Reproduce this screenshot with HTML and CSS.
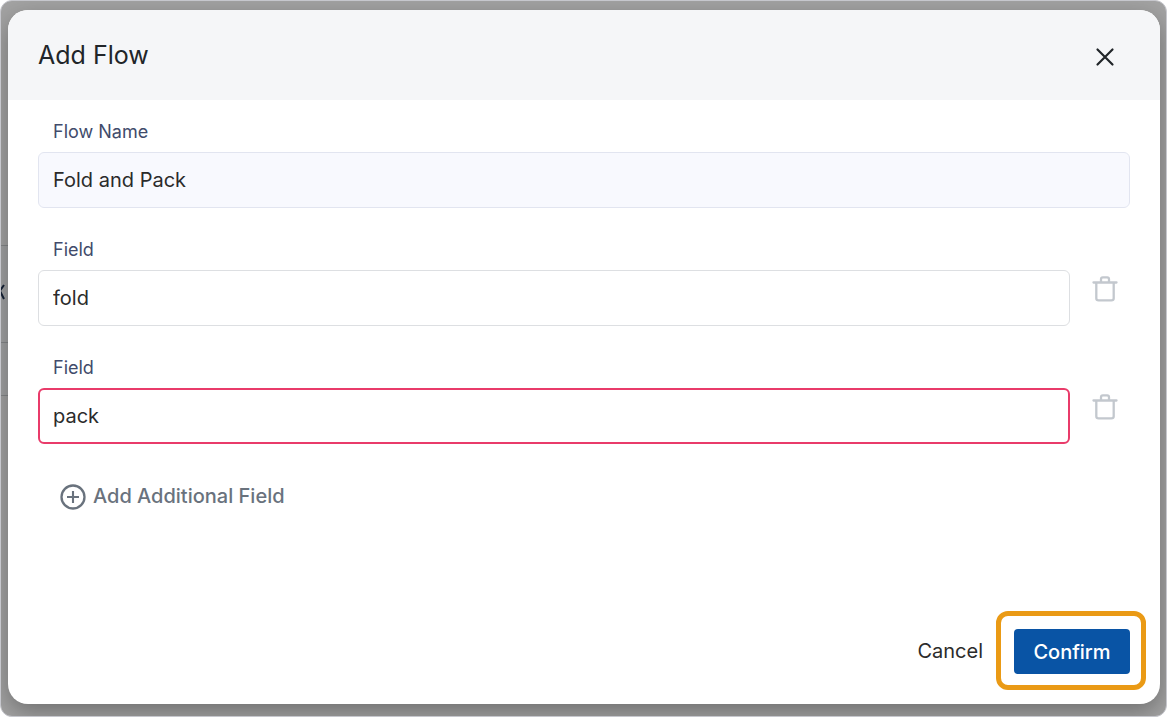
FILE: index.html
```html
<!DOCTYPE html>
<html lang="en">
<head>
<meta charset="utf-8">
<title>Add Flow</title>
<link rel="stylesheet" href="styles.css">
</head>
<body>
<div class="screen">
  <div class="backdrop" aria-hidden="true">
    <div class="backdrop-row row-empty"></div>
    <div class="backdrop-row row-item"><svg width="4" height="18" viewBox="0 0 4 18"><path d="M-2 9L3 2M-1 8L3 16" fill="none" stroke="#142136" stroke-width="2"/></svg></div>
    <div class="backdrop-row row-last"></div>
  </div>
  <form class="modal" role="dialog" aria-labelledby="title">
    <header class="modal-header">
      <h1 class="title" id="title">Add Flow</h1>
      <button class="icon-button close" type="button" aria-label="Close">
        <svg width="20" height="20" viewBox="0 0 20 20"><path d="M2.5 2.5L17.5 17.5M17.5 2.5L2.5 17.5" fill="none" stroke="#212529" stroke-width="2.2" stroke-linecap="round"/></svg>
      </button>
    </header>
    <div class="modal-body">
      <div class="field">
        <label class="label" for="flow">Flow Name</label>
        <input class="input input-filled" id="flow" type="text" value="Fold and Pack">
      </div>
      <div class="field">
        <label class="label" for="field1">Field</label>
        <div class="field-row">
          <input class="input" id="field1" type="text" value="fold">
          <button class="icon-button trash" type="button" aria-label="Delete field">
            <svg width="26" height="26" viewBox="0 0 26 26"><path d="M1.5 6.5H24.5M4.3 6.5V22.3Q4.3 24.4 6.6 24.4H19.4Q21.7 24.4 21.7 22.3V6.5M9 6.5V3.2Q9 1.4 10.8 1.4H15.2Q17 1.4 17 3.2V6.5" fill="none" stroke="#c3c8ce" stroke-width="2.3" stroke-linecap="round"/></svg>
          </button>
        </div>
      </div>
      <div class="field">
        <label class="label" for="field2">Field</label>
        <div class="field-row">
          <input class="input input-active" id="field2" type="text" value="pack">
          <button class="icon-button trash" type="button" aria-label="Delete field">
            <svg width="26" height="26" viewBox="0 0 26 26"><path d="M1.5 6.5H24.5M4.3 6.5V22.3Q4.3 24.4 6.6 24.4H19.4Q21.7 24.4 21.7 22.3V6.5M9 6.5V3.2Q9 1.4 10.8 1.4H15.2Q17 1.4 17 3.2V6.5" fill="none" stroke="#c3c8ce" stroke-width="2.3" stroke-linecap="round"/></svg>
          </button>
        </div>
      </div>
      <button class="add" type="button">
        <svg width="26" height="26" viewBox="0 0 26 26"><path d="M13 7V19M7 13H19" fill="none" stroke="#69727d" stroke-width="2.1"/><circle cx="13" cy="13" r="11.5" fill="none" stroke="#69727d" stroke-width="2.3"/></svg>
        <span class="add-text">Add Additional Field</span>
      </button>
    </div>
    <footer class="modal-footer">
      <button class="cancel" type="button">Cancel</button>
      <div class="highlight"><button class="confirm" type="submit">Confirm</button></div>
    </footer>
  </form>
</div>
</body>
</html>
```
FILE: styles.css
```css
* { box-sizing: border-box; }
body { margin: 0; background: #fff; font-family: Inter, sans-serif; color: #212529; }
button { padding: 0; border: 0; background: none; font: inherit; color: inherit; cursor: pointer; }
svg { display: block; }

.screen {
  position: relative;
  display: flex;
  min-height: 100vh;
  padding: 9px 6px 12px 7px;
  border: 1px solid #c6c7cd;
  border-radius: 12px;
  background: #a3a3a3;
  overflow: hidden;
}
.backdrop { position: absolute; inset: 0 auto 0 0; width: 16px; }
.backdrop-row { border-bottom: 1px solid #858789; }
.row-empty { height: 245px; }
.row-item { height: 97px; padding-top: 37px; background: #a1a2a3; }
.row-last { height: 53px; background: #a1a2a3; }

.modal {
  position: relative;
  display: flex;
  flex: 1;
  flex-direction: column;
  border-radius: 20px;
  background: #fff;
  box-shadow: 0 8px 24px rgba(0, 0, 0, 0.32);
}
.modal-header {
  display: flex;
  justify-content: space-between;
  align-items: center;
  height: 90px;
  padding: 0 45px 0 30px;
  border-radius: 20px 20px 0 0;
  background: #f5f6f8;
}
.title { margin: 0; font-size: 25px; line-height: 30px; font-weight: 400; }
.close { margin-top: 4px; }
.modal-body { display: flex; flex-direction: column; gap: 30px; flex: 1; padding: 20px 30px; }
.label { display: block; margin: 0 0 8px 15px; font-size: 18px; line-height: 24px; color: #414b6b; }
.field-row { display: flex; gap: 22px; }
.trash { height: 26px; margin: 6px 12px 0 0; }
.input {
  display: block;
  flex: 1;
  width: 100%;
  min-width: 0;
  height: 56px;
  padding: 0 14px;
  border: 1px solid #dddfe2;
  border-radius: 6px;
  outline: 0;
  background: #fff;
  font: 400 20px/24px Inter, sans-serif;
  color: #2b2b2b;
}
.input-filled { border-color: #e2e5f0; background: #f8f9fe; }
.input-active { padding: 0 13px; border: 2px solid #e93b6a; }
.add {
  display: flex;
  align-items: flex-start;
  align-self: flex-start;
  gap: 7px;
  margin: 10px 0 0 22px;
  font-size: 20px;
  line-height: 24px;
  font-weight: 500;
  color: #69727d;
}
.modal-footer { display: flex; justify-content: flex-end; align-items: center; gap: 13px; padding: 0 14px 14px; }
.cancel { font-size: 20px; line-height: 24px; color: #2b2b2b; }
.highlight { padding: 13px 11px 11px 13px; border: 5px solid #ea9a15; border-radius: 12px; }
.confirm {
  display: block;
  width: 116px;
  height: 45px;
  border-radius: 4px;
  background: #0954a5;
  color: #fff;
  font-size: 20px;
  line-height: 24px;
  font-weight: 500;
}
```
